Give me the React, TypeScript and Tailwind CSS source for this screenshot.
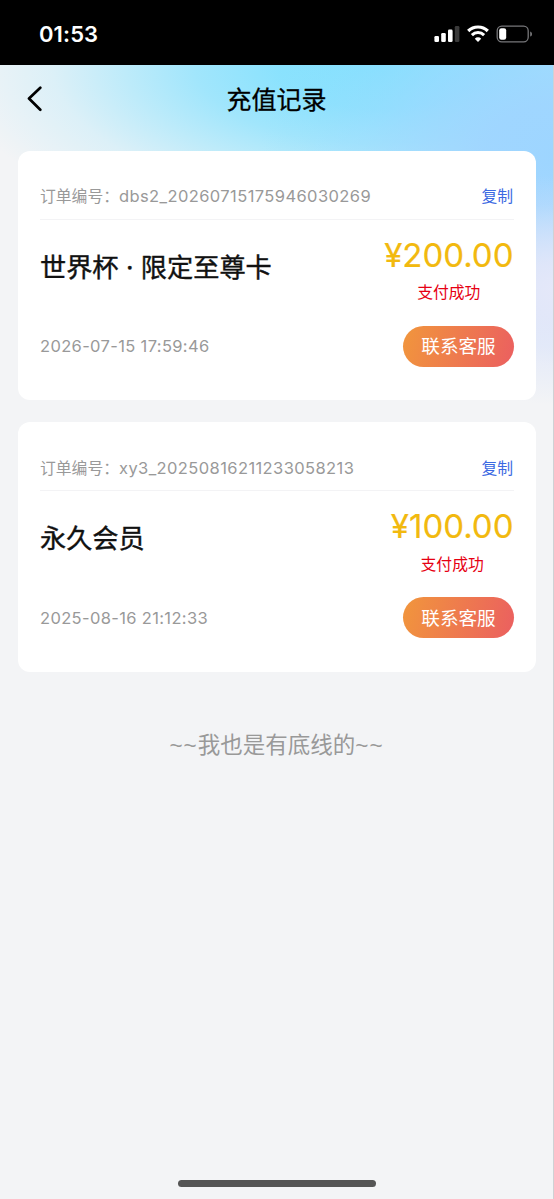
interface RechargeOrder {
  orderNo: string;
  name: string;
  amount: string;
  status: string;
  createdAt: string;
}

const orders: RechargeOrder[] = [
  {
    orderNo: "dbs2_20260715175946030269",
    name: "世界杯 · 限定至尊卡",
    amount: "¥200.00",
    status: "支付成功",
    createdAt: "2026-07-15 17:59:46",
  },
  {
    orderNo: "xy3_20250816211233058213",
    name: "永久会员",
    amount: "¥100.00",
    status: "支付成功",
    createdAt: "2025-08-16 21:12:33",
  },
];

const StatusBar: React.FC = () => (
  <div className="flex h-[65px] shrink-0 items-center justify-between bg-black pl-[39px] pr-[21px] pt-[3px] text-white">
    <span className="text-[22px] font-semibold leading-none tracking-[0.1px]">01:53</span>
    <div className="flex items-center gap-[7px]">
      <svg width="26" height="18" viewBox="0 0 26 18" fill="currentColor" aria-hidden>
        <rect x="0.4" y="11" width="4.6" height="6" rx="1.3" />
        <rect x="7.2" y="8" width="4.6" height="9" rx="1.3" />
        <rect x="14" y="4.6" width="4.6" height="12.4" rx="1.3" />
        <rect x="20.8" y="1" width="4.6" height="16" rx="1.3" fill="#3a3a3a" />
      </svg>
      <svg width="22" height="18" viewBox="0 0 22 18" fill="none" stroke="currentColor" aria-hidden>
        <path d="M1.2 6a14 14 0 0 1 19.6 0" strokeWidth="3.2" />
        <path d="M4.9 10.1a8.6 8.6 0 0 1 12.2 0" strokeWidth="3" />
        <path d="M11 17l-3.2-3.3a4.5 4.5 0 0 1 6.4 0z" fill="currentColor" stroke="none" />
      </svg>
      <svg width="37" height="18" viewBox="0 0 37 18" aria-hidden>
        <rect x="1.2" y="1.2" width="31" height="15.6" rx="4.6" fill="none" stroke="#77777a" strokeWidth="1.3" />
        <rect x="3.2" y="3.2" width="7" height="11.6" rx="2.2" fill="#fff" />
        <path d="M34.2 6.4c2.4.7 2.4 4.5 0 5.2z" fill="#77777a" />
      </svg>
    </div>
  </div>
);

const NavBar: React.FC = () => (
  <header className="grid h-[68px] shrink-0 grid-cols-[1fr_auto_1fr] items-center px-[27px]">
    <button type="button" aria-label="返回" className="w-4">
      <svg width="16" height="26" viewBox="0 0 16 26" fill="none" stroke="#000" strokeWidth="2.7" strokeLinecap="round" strokeLinejoin="round">
        <path d="M13.3 1.8L2 12.5l11.3 11.2" />
      </svg>
    </button>
    <h1 className="pt-0.5 text-[25px] leading-none text-black [-webkit-text-stroke:0.3px_#000]">充值记录</h1>
  </header>
);

const OrderCard: React.FC<{ order: RechargeOrder }> = ({ order }) => (
  <article className="flex h-[249.5px] flex-col rounded-xl bg-white px-[22px] pt-[22px]">
    <div className="flex h-[47px] shrink-0 items-center justify-between border-b border-[#f3f3f5] pt-0.5 text-[15.8px]">
      <div className="flex items-center text-[#999]">
        <span>订单编号：</span>
        <span className="text-[16.5px] tracking-[0.4px]">{order.orderNo}</span>
      </div>
      <button type="button" className="pr-px text-[#3c69e2]">复制</button>
    </div>

    <div className="flex h-[106px] shrink-0 justify-between">
      <h2 className="mt-[35px] text-[26.2px] leading-[26px] text-[#111] [-webkit-text-stroke:0.4px_#111]">{order.name}</h2>
      <div className="flex flex-col items-center pr-[0.5px] pt-[17px]">
        <div className="text-[33px] leading-[36px] text-[#f2b90f] [-webkit-text-stroke:0.2px_#f2b90f]">{order.amount}</div>
        <div className="mt-[11.5px] text-[15.8px] leading-[18px] text-[#e60012]">{order.status}</div>
      </div>
    </div>

    <div className="flex h-[41px] items-center justify-between">
      <time className="pt-px text-[16.5px] tracking-[0.35px] text-[#999]">{order.createdAt}</time>
      <button
        type="button"
        className="h-[41px] w-[111px] rounded-full bg-linear-[105deg] from-[#f1963c] to-[#eb5f60] pt-0.5 text-[18.6px] text-white"
      >
        联系客服
      </button>
    </div>
  </article>
);

export default function App() {
  return (
    <div className="flex h-[1199px] w-[554px] flex-col overflow-hidden bg-[#f3f4f6] font-['Inter','Noto_Sans_CJK_SC',sans-serif]">
      <StatusBar />
      {/* header glow: lavender on the right edge, light blue in the corner, cyan along the top */}
      <div className="flex grow flex-col border-r border-[#cfd1d4] bg-[radial-gradient(ellipse_160px_115px_at_560px_225px,#e5e8f9_0%,#e2e6f9e0_25%,#dce3fa99_50%,#d5e0fa44_75%,#d5e0fa00_100%),radial-gradient(ellipse_300px_210px_at_560px_90px,#9dd5ff_0%,#9fd5fff0_25%,#9fd6ffb0_45%,#9fd8ff60_65%,#9fdaff20_85%,#9fdaff00_100%),radial-gradient(ellipse_410px_175px_at_380px_0px,#82e1fe_0%,#84e1fef0_25%,#86e1fec0_45%,#88e2fe80_62%,#8ae2fe38_80%,#8ee2fe00_105%)]">
        <NavBar />
        <main className="mt-[17.6px] flex flex-col gap-[22.3px] pl-[18px] pr-[17px]">
          {orders.map((order) => (
            <OrderCard key={order.orderNo} order={order} />
          ))}
        </main>
        <p className="mt-[59px] text-center font-['Liberation_Sans','Noto_Sans_CJK_SC',sans-serif] text-[22.5px] leading-[30px] text-[#999]">
          <span className="tracking-[1px]">~~</span>我也是有底线的<span className="tracking-[1px]">~~</span>
        </p>
        <div className="mx-auto mb-[12px] mt-auto h-[7.5px] w-[198px] rounded-full bg-[#555]" />
      </div>
    </div>
  );
}
